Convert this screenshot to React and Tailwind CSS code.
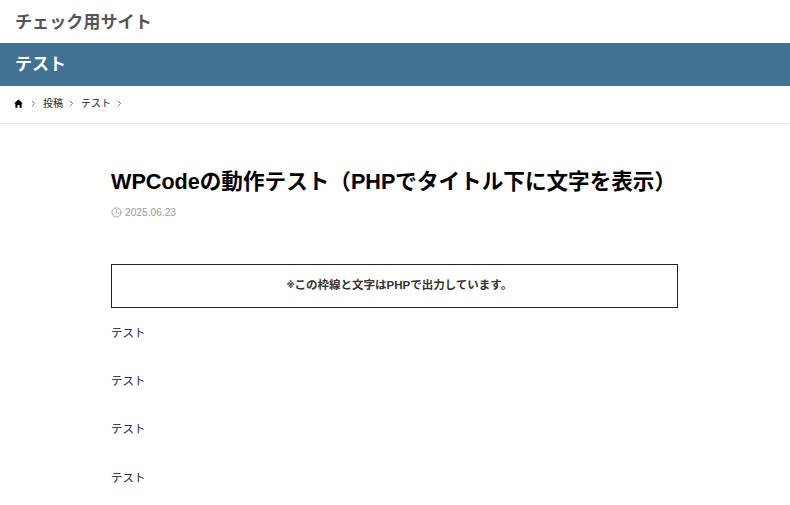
import { FiChevronRight, FiClock } from 'react-icons/fi';
import { IoMdHome } from 'react-icons/io';

const font = "font-['Liberation_Sans','Noto_Sans_CJK_JP',sans-serif]";
const paragraphs = ['テスト', 'テスト', 'テスト', 'テスト'];

const Crumb = ({ children }) => (
    <li className="flex items-center">
        {children}
        <FiChevronRight className="ml-[4px] text-[9px] text-[#444]" />
    </li>
);

export default function App() {
    return (
        <div className={`${font} min-h-[505px] overflow-hidden bg-white text-black`}>
            <header className="flex h-[43px] items-center px-[15px] pt-[2px]">
                <div className="text-[17.1px] font-bold text-[#555]">チェック用サイト</div>
            </header>
            <div className="flex h-[43px] items-center bg-[#437194] px-[15px]">
                <div className="text-[17px] font-bold text-white">テスト</div>
            </div>
            <nav className="h-[38px] border-b border-[#e5e5e5]">
                <ul className="flex h-[35px] items-center gap-[5px] pl-[13px] text-[10px] text-[#222]">
                    <Crumb>
                        <IoMdHome className="mr-[1px] text-[11px] text-black" />
                    </Crumb>
                    <Crumb>投稿</Crumb>
                    <Crumb>テスト</Crumb>
                </ul>
            </nav>
            <main className="ml-[111px] w-[567px]">
                <h1 className="mt-[43px] text-[21.6px] leading-[30px] font-bold whitespace-nowrap">
                    WPCodeの動作テスト（PHPでタイトル下に文字を表示）
                </h1>
                <div className="mt-[8px] flex h-[15px] items-center gap-[3px] text-[10.2px] text-[#999]">
                    <FiClock className="text-[11px]" />
                    <span>2025.06.23</span>
                </div>
                <div className="mt-[44px] flex h-[44px] items-center justify-center border border-[#222] pl-[10px] text-[11.5px] font-bold text-[#333]">
                    <span className="font-['DejaVu_Sans',sans-serif] text-[8px]">※</span>
                    この枠線と文字はPHPで出力しています。
                </div>
                <div className="mt-[16px] flex flex-col gap-[30.2px] text-[11.5px] leading-[18px] text-[#222]">
                    {paragraphs.map((text, idx) => (
                        <p key={idx}>{text}</p>
                    ))}
                </div>
            </main>
        </div>
    );
}
